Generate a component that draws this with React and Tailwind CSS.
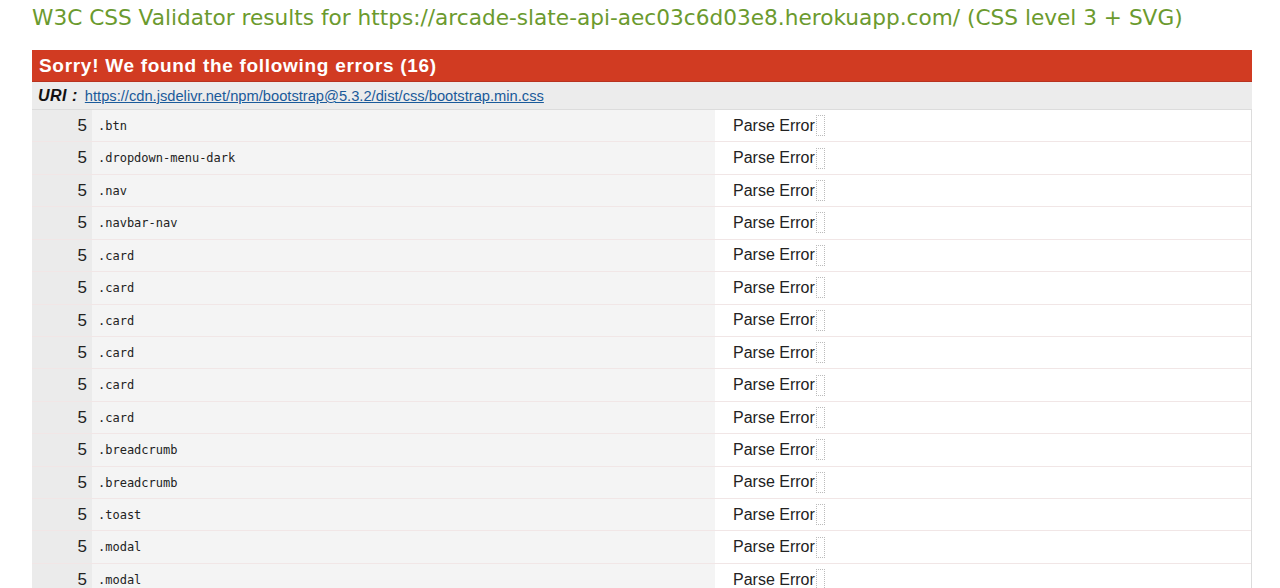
import React from "react";

const rows = [
  ".btn",
  ".dropdown-menu-dark",
  ".nav",
  ".navbar-nav",
  ".card",
  ".card",
  ".card",
  ".card",
  ".card",
  ".card",
  ".breadcrumb",
  ".breadcrumb",
  ".toast",
  ".modal",
  ".modal",
];

export default function App() {
  return (
    <div className="min-h-[588px] bg-white pl-[32px] pr-[28px] overflow-hidden" style={{ fontFamily: '"Liberation Sans", Arial, sans-serif' }}>
      <h1
        className="text-[21.65px] leading-[36px] text-[#6b9a2e] whitespace-nowrap font-normal"
        style={{ fontFamily: '"DejaVu Sans", Verdana, sans-serif' }}
      >
        W3C CSS Validator results for https://arcade-slate-api-aec03c6d03e8.herokuapp.com/ (CSS level 3 + SVG)
      </h1>
      <div className="mt-[14px]">
        <div className="h-[32px] bg-[#d13b22] text-white font-bold text-[19px] tracking-[0.7px] leading-[32px] pl-[7px] border-b border-[#b83220]">
          Sorry! We found the following errors (16)
        </div>
        <div className="h-[28px] bg-[#ececec] text-[14.7px] leading-[28px] pl-[6px] text-[#111] border-b border-[#dcdcdc]">
          <span className="font-bold italic text-[16px] tracking-[0.5px] mr-[7px]">URI :</span>
          <a className="text-[#1a5a9a] underline" href="#">https://cdn.jsdelivr.net/npm/bootstrap@5.3.2/dist/css/bootstrap.min.css</a>
        </div>
        <div className="border-r border-[#dcdcdc]">
          {rows.map((sel, i) => (
            <div key={i} className="flex h-[32.43px] border-b border-[#f1e6e6]">
              <div className="w-[60px] shrink-0 bg-[#ebebeb] text-right pr-[5px] text-[17px] leading-[31px] text-[#222]">5</div>
              <div
                className="w-[623px] shrink-0 bg-[#f4f4f4] pl-[6px] text-[12px] leading-[33px] text-[#222]"
                style={{ fontFamily: '"DejaVu Sans Mono", "Liberation Mono", monospace' }}
              >
                {sel}
              </div>
              <div className="flex-1 bg-white pl-[18px] flex items-center">
                <span className="text-[16px] text-[#222]">Parse Error</span>
                <span className="inline-block w-[9px] h-[21px] border border-dotted border-[#bbb] ml-[1px]"></span>
              </div>
            </div>
          ))}
        </div>
      </div>
    </div>
  );
}
